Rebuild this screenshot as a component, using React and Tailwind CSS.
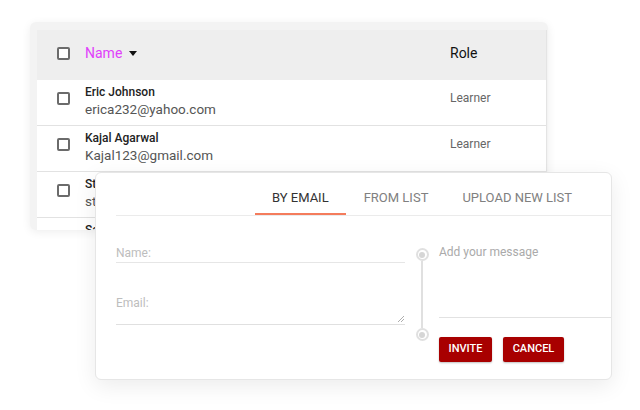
import React from 'react'

const rows = [
  { name: 'Eric Johnson', email: 'erica232@yahoo.com', role: 'Learner' },
  { name: 'Kajal Agarwal', email: 'Kajal123@gmail.com', role: 'Learner' },
  { name: 'Steve Smith', email: 'steve.smith@gmail.com', role: 'Learner' },
  { name: 'Sara Lee', email: 'sara.lee@gmail.com', role: 'Learner' },
]

const Box = () => (
  <span className="block w-[13px] h-[13px] shrink-0 rounded-[2px] border-2 border-[#6b6b6b] bg-white" />
)

const Dot = () => (
  <span className="flex items-center justify-center w-[13px] h-[13px] rounded-full border-2 border-[#e0e0e0] bg-white">
    <span className="block w-[6px] h-[6px] rounded-full bg-[#d6d6d6]" />
  </span>
)

export default function App() {
  return (
    <div
      className="relative w-[640px] h-[410px] overflow-hidden bg-white"
      style={{ fontFamily: 'Roboto, "Liberation Sans", sans-serif' }}
    >
      {/* table card behind */}
      <div className="ml-[30px] mt-[22px] w-[518px] h-[208px] overflow-hidden rounded-[6px] bg-[#f3f3f3] pl-[7px] pt-[8px] pr-[1px] shadow-[0_2px_10px_rgba(0,0,0,0.07)]">
        <div className="bg-white border-r border-[#e4e4e4]">
          <div className="flex items-center h-[50px] bg-[#eeeeee] pl-[20px] pb-[4px]">
            <Box />
            <span className="ml-[15px] text-[14px] text-[#e040fb]">Name</span>
            <svg width="8" height="5" viewBox="0 0 8 5" className="ml-[7px] mt-[1px]">
              <path d="M0 0h8L4 5z" fill="#111" />
            </svg>
            <span className="ml-auto w-[96px] text-[14px] text-[#111]">Role</span>
          </div>
          {rows.map((r) => (
            <div key={r.email} className="flex h-[46px] border-b border-[#e2e2e2] pl-[20px]">
              <div className="pt-[12px]">
                <Box />
              </div>
              <div className="ml-[15px] pt-[5px]">
                <div className="text-[12px] leading-[15px] font-medium text-[#222]">{r.name}</div>
                <div className="text-[13.5px] leading-[18px] text-[#555]">{r.email}</div>
              </div>
              <span className="ml-auto w-[96px] pt-[11px] text-[12px] leading-[14px] text-[#666]">{r.role}</span>
            </div>
          ))}
        </div>
      </div>

      {/* invite dialog on top */}
      <div className="absolute left-[95px] top-[172px] w-[517px] h-[208px] rounded-[6px] border border-[#e6e6e6] bg-white shadow-[0_6px_22px_rgba(0,0,0,0.08)]">
        <div className="ml-[20px] flex border-b border-[#ebebeb] pl-[139px]">
          <div className="flex h-[42px] items-start border-b-2 border-[#f47c5c] px-[17px] pt-[17px]">
            <span className="text-[13px] leading-[16px] text-[#333]">BY EMAIL</span>
          </div>
          <div className="flex h-[42px] items-start px-[18px] pt-[17px]">
            <span className="text-[13px] leading-[16px] text-[#808080]">FROM LIST</span>
          </div>
          <div className="flex h-[42px] items-start px-[16px] pt-[17px]">
            <span className="text-[13px] leading-[16px] text-[#808080]">UPLOAD NEW LIST</span>
          </div>
        </div>

        <div className="flex pl-[20px]">
          <div className="w-[289px]">
            <div className="pt-[30px] pb-[2px] border-b border-[#e6e6e6] text-[12px] leading-[14px] text-[#bdbdbd]">Name:</div>
            <div className="relative h-[62px] pt-[33px] border-b border-[#e0e0e0] text-[12px] leading-[14px] text-[#bdbdbd]">
              Email:
              <svg width="6" height="6" viewBox="0 0 6 6" className="absolute right-[1px] bottom-[2px]">
                <path d="M0 6L6 0M3 6L6 3" stroke="#999" strokeWidth="0.8" />
              </svg>
            </div>
          </div>

          <div className="flex w-[34px] flex-col items-center pt-[32px]">
            <Dot />
            <span className="block w-[2px] h-[67px] bg-[#e0e0e0]" />
            <Dot />
          </div>

          <div className="flex-1">
            <div className="h-[102px] pt-[29px] border-b border-[#e2e2e2] text-[12px] leading-[14px] text-[#aaaaaa]">
              Add your message
            </div>
            <div className="flex gap-[11px] pt-[19px]">
              <button className="h-[25px] w-[53px] rounded-[2px] bg-[#a80000] text-[11px] font-medium text-white shadow-[0_1px_2px_rgba(0,0,0,0.25)]">
                INVITE
              </button>
              <button className="h-[25px] w-[61px] rounded-[2px] bg-[#a80000] text-[11px] font-medium text-white shadow-[0_1px_2px_rgba(0,0,0,0.25)]">
                CANCEL
              </button>
            </div>
          </div>
        </div>
      </div>
    </div>
  )
}
